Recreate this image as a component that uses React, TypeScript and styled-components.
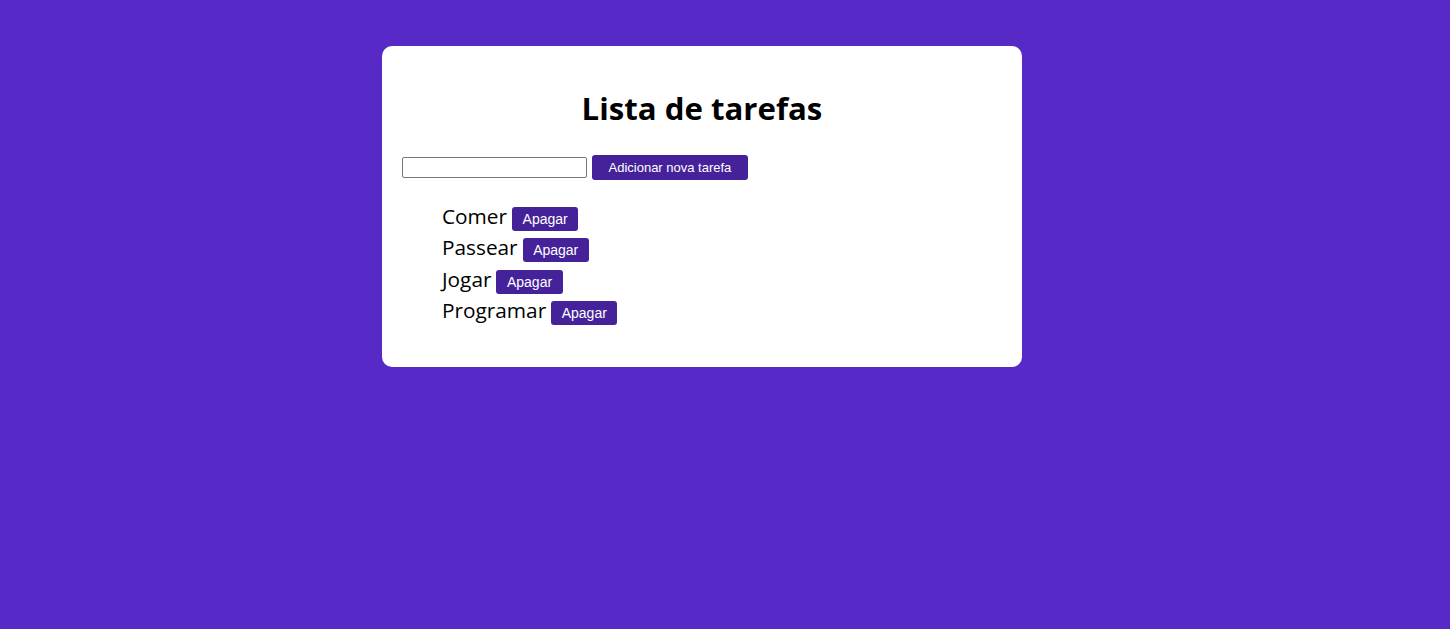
import React, { useState } from 'react';
import styled, { createGlobalStyle } from 'styled-components';

const GlobalStyle = createGlobalStyle`
    html, body {
        margin: 0;
        padding: 0;
        background: #5729c7;
        min-height: 100%;
    }
`;

const Page = styled.div`
    display: flex;
    justify-content: center;
    align-items: flex-start;
    padding-top: 46px;
    padding-right: 46px;
    min-height: 629px;
    box-sizing: border-box;
`;

const Card = styled.div`
    width: 640px;
    height: 321px;
    background: #fff;
    border-radius: 10px;
    padding: 20px;
    box-sizing: border-box;
    font-family: 'Open Sans', sans-serif;
`;

const Title = styled.h1`
    font-size: 31.2px;
    font-weight: 700;
    text-align: center;
    margin: 20px 0 25px;
    line-height: 44px;
    color: #000;
`;

const Form = styled.form`
    display: flex;
    align-items: center;
    gap: 5px;
    height: 25px;
`;

const Input = styled.input`
    width: 185px;
    height: 21px;
    box-sizing: border-box;
    border: 1px solid #767676;
    border-radius: 2px;
    padding: 1px 2px;
    margin: 0;
`;

const Button = styled.button<{ $big?: boolean }>`
    background: #45229a;
    color: #fff;
    border: none;
    border-radius: 3px;
    font-family: 'Liberation Sans', Arial, sans-serif;
    font-size: ${(p) => (p.$big ? '13px' : '14px')};
    height: ${(p) => (p.$big ? '25px' : '24px')};
    padding: 0 ${(p) => (p.$big ? '16.5px' : '10.5px')};
    cursor: pointer;
    margin: 0;
`;

const List = styled.ul`
    margin: 22px 0 0;
    padding-left: 40px;
    list-style: none;
`;

const Item = styled.li`
    display: flex;
    align-items: baseline;
    gap: 5px;
    height: 31.3px;
    font-size: 20.8px;
    color: #000;
`;

export default function App() {
    const [text, setText] = useState('');
    const [tasks, setTasks] = useState(['Comer', 'Passear', 'Jogar', 'Programar']);

    const add = (e: React.FormEvent): void => {
        e.preventDefault();
        if (!text.trim()) return;
        setTasks([...tasks, text.trim()]);
        setText('');
    };

    return (
        <>
            <GlobalStyle />
            <Page>
                <Card>
                    <Title>Lista de tarefas</Title>
                    <Form onSubmit={add}>
                        <Input value={text} onChange={(e) => setText(e.target.value)} />
                        <Button $big type="submit">
                            Adicionar nova tarefa
                        </Button>
                    </Form>
                    <List>
                        {tasks.map((t, i) => (
                            <Item key={i}>
                                {t}
                                <Button onClick={() => setTasks(tasks.filter((_, j) => j !== i))}>Apagar</Button>
                            </Item>
                        ))}
                    </List>
                </Card>
            </Page>
        </>
    );
}
